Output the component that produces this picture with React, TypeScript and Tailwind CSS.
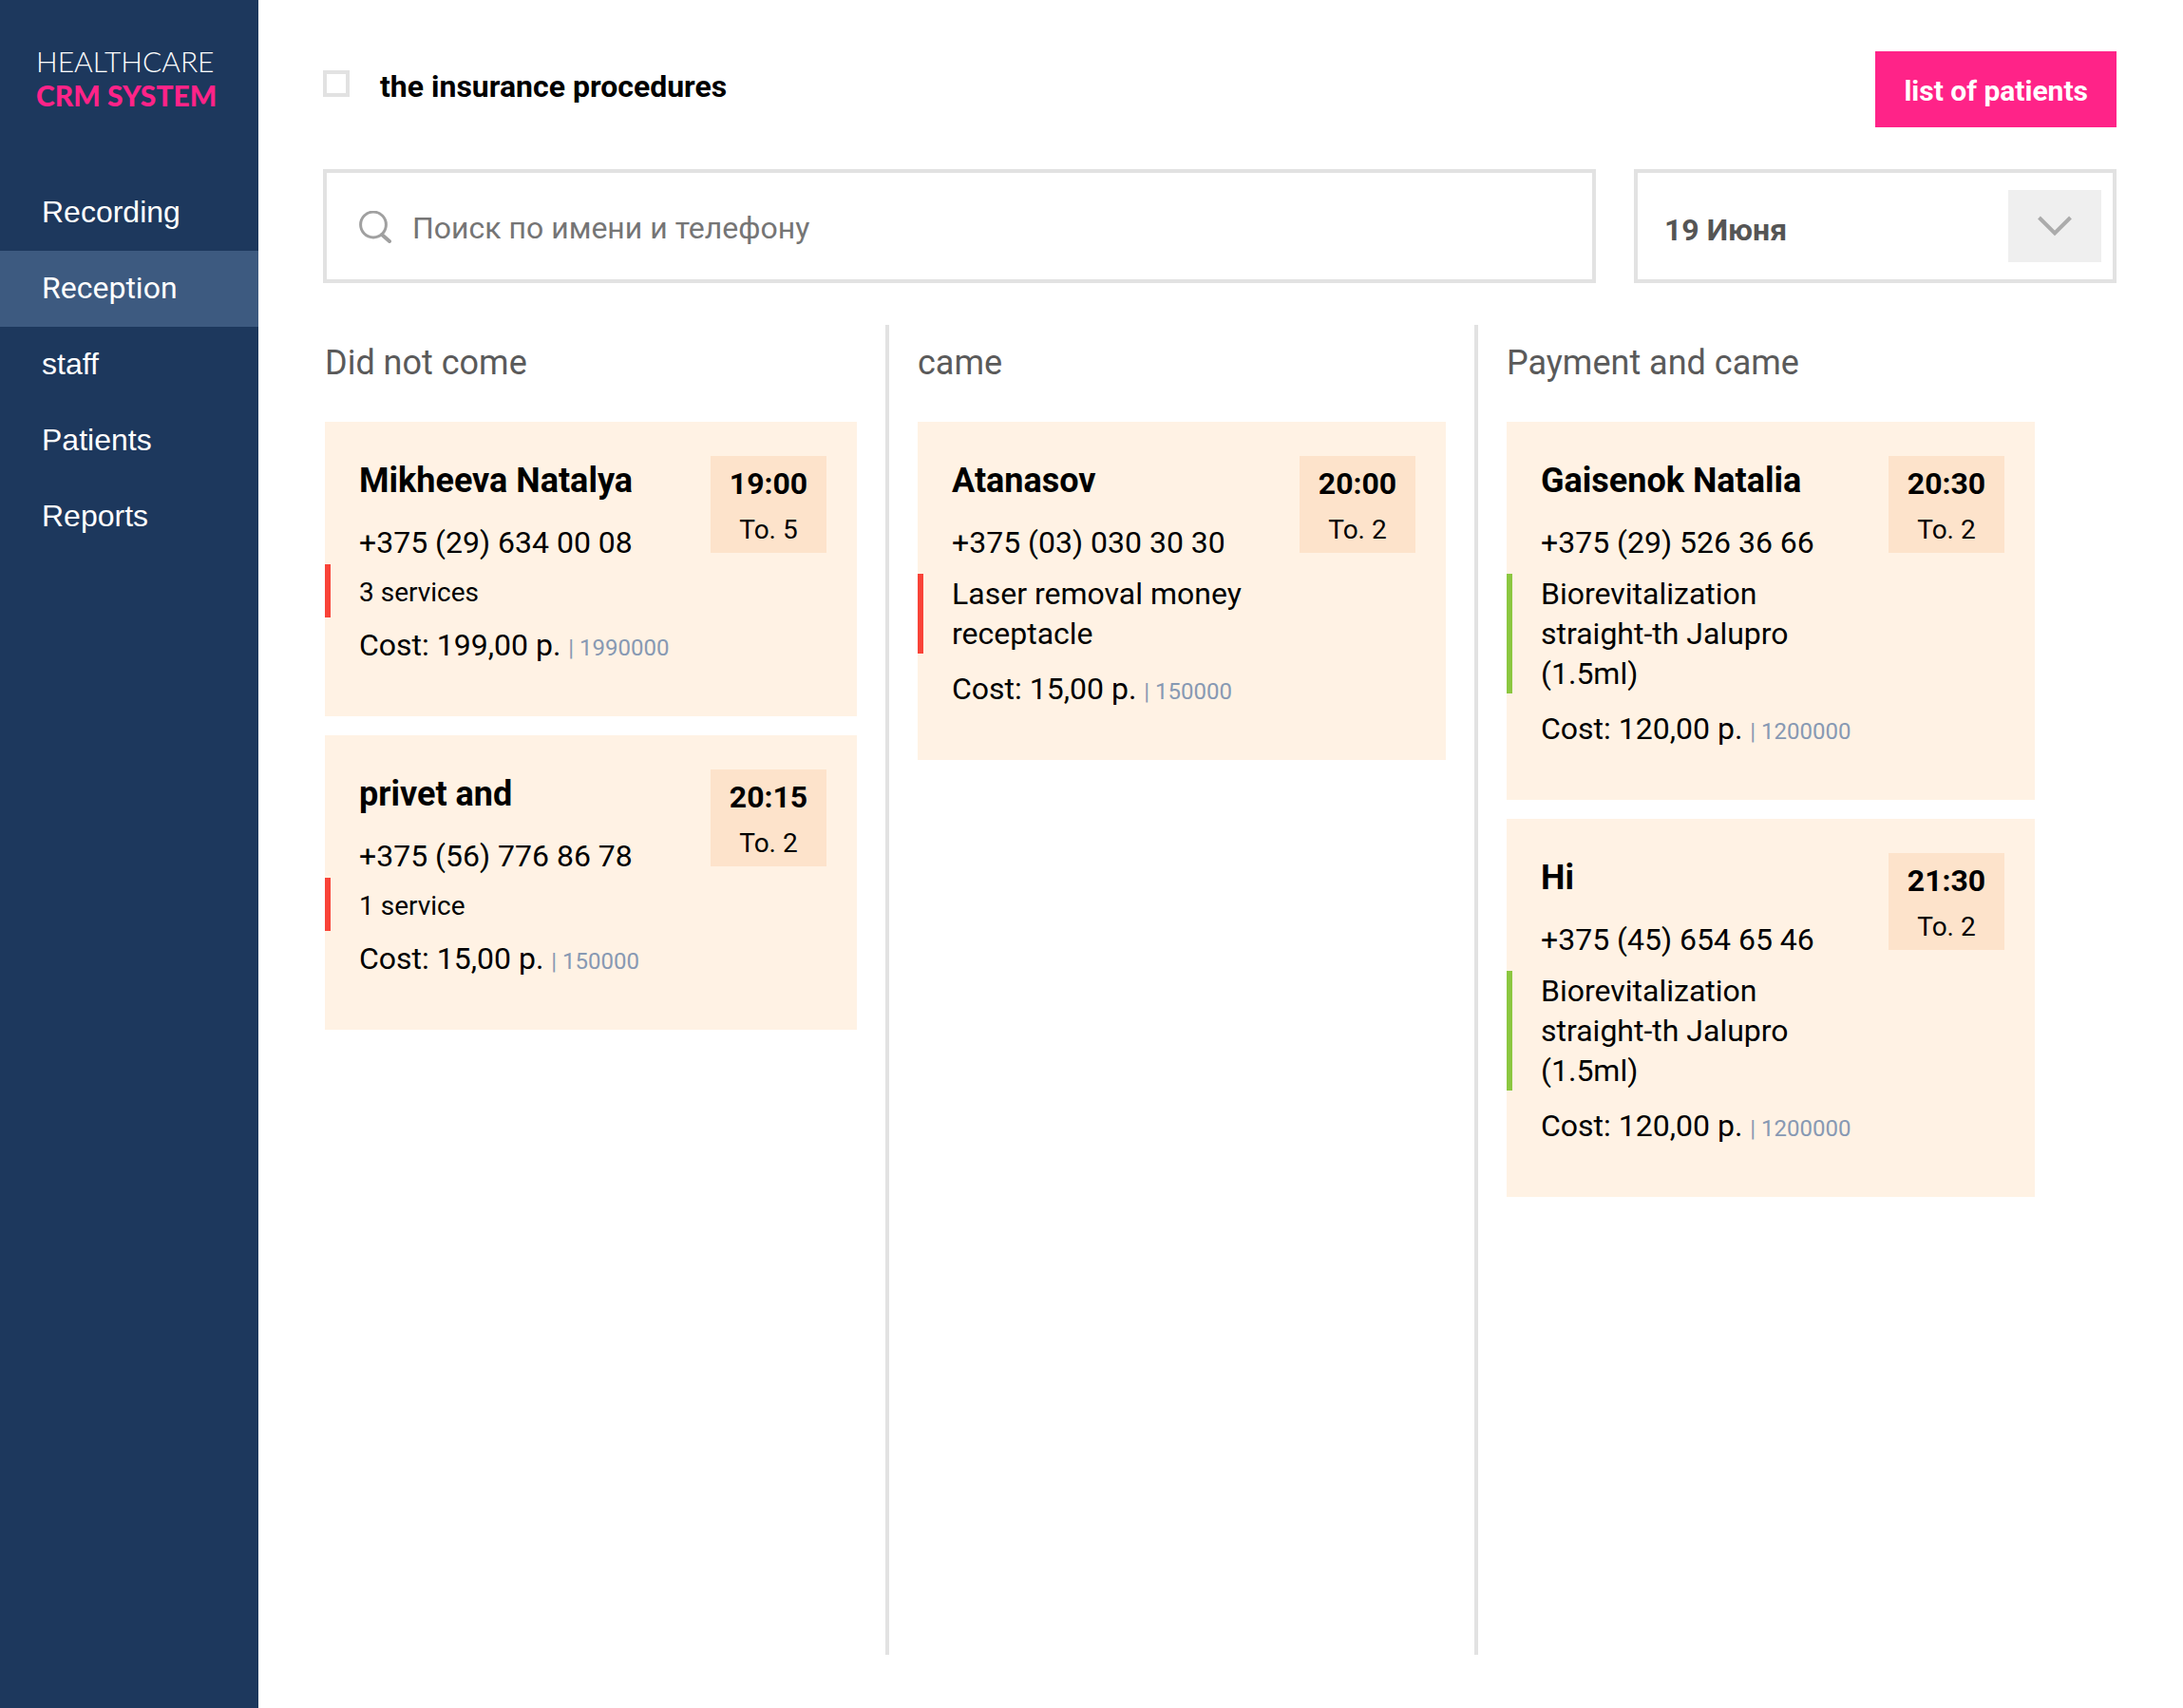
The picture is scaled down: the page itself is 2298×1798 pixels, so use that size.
import { useState } from "react";

type Visit = {
  name: string;
  phone: string;
  time: string;
  place: string;
  service: string;
  summary?: boolean;
  paid?: boolean;
  cost: string;
  oldCost: string;
};

const navItems = ["Recording", "Reception", "staff", "Patients", "Reports"];

const columns: { title: string; visits: Visit[] }[] = [
  {
    title: "Did not come",
    visits: [
      { name: "Mikheeva Natalya", phone: "+375 (29) 634 00 08", time: "19:00", place: "To. 5", service: "3 services", summary: true, cost: "199,00", oldCost: "1990000" },
      { name: "privet and", phone: "+375 (56) 776 86 78", time: "20:15", place: "To. 2", service: "1 service", summary: true, cost: "15,00", oldCost: "150000" },
    ],
  },
  {
    title: "came",
    visits: [
      { name: "Atanasov", phone: "+375 (03) 030 30 30", time: "20:00", place: "To. 2", service: "Laser removal money receptacle", cost: "15,00", oldCost: "150000" },
    ],
  },
  {
    title: "Payment and came",
    visits: [
      { name: "Gaisenok Natalia", phone: "+375 (29) 526 36 66", time: "20:30", place: "To. 2", service: "Biorevitalization straight-th Jalupro (1.5ml)", paid: true, cost: "120,00", oldCost: "1200000" },
      { name: "Hi", phone: "+375 (45) 654 65 46", time: "21:30", place: "To. 2", service: "Biorevitalization straight-th Jalupro (1.5ml)", paid: true, cost: "120,00", oldCost: "1200000" },
    ],
  },
];

function Sidebar() {
  return (
    <aside className="w-[272px] shrink-0 bg-[#1d385d] text-white">
      <a href="#" className="flex h-[184px] flex-col pt-[46px] pl-[38px] font-['Lato',sans-serif] text-3xl leading-9">
        <span className="font-light">HEALTHCARE</span>
        <span className="font-black text-[#ff2388]">CRM SYSTEM</span>
      </a>
      <nav className="flex flex-col">
        {navItems.map((item) => (
          <a
            key={item}
            href="#"
            aria-current={item === "Reception" ? "page" : undefined}
            className={
              item === "Reception"
                ? "flex h-20 items-center bg-[#3d5a80] pb-[2px] pl-11 font-['Roboto',sans-serif] text-[32px]"
                : "flex h-20 items-center pb-[2px] pl-11 font-['Liberation_Sans',sans-serif] text-[32px]"
            }
          >
            {item}
          </a>
        ))}
      </nav>
    </aside>
  );
}

function VisitCard({ visit }: { visit: Visit }) {
  const bar = visit.paid ? "border-[#8cc740]" : "border-[#f94338]";
  const size = visit.summary
    ? "mt-[2px] pt-1 text-[28px] leading-[52px]"
    : "mt-3 text-[32px] leading-[42px]";
  return (
    <article className="flex items-start bg-[#fff2e4] pt-9 pr-8 pb-[54px]">
      <div className="min-w-0 flex-1 text-[32px] leading-[42px]">
        <h3 className="pl-9 text-4xl leading-[52px] font-bold">{visit.name}</h3>
        <p className="mt-[18px] pl-9">{visit.phone}</p>
        <p className={`border-l-6 pr-8 pl-[30px] ${bar} ${size}`}>{visit.service}</p>
        <p className={visit.summary ? "mt-2 pl-9" : "mt-4 pl-9"}>
          Cost: {visit.cost} p. <span className="text-2xl leading-none text-[#8799b3]">| {visit.oldCost}</span>
        </p>
      </div>
      <div className="flex h-[102px] w-[122px] shrink-0 flex-col items-center bg-[#fde3cb] pt-2">
        <time className="text-[32px] leading-[42px] font-bold">{visit.time}</time>
        <span className="mt-[10px] text-[28px] leading-9">{visit.place}</span>
      </div>
    </article>
  );
}

export default function App() {
  const [insurance, setInsurance] = useState(false);
  return (
    <div className="flex min-h-screen bg-white font-['Roboto',sans-serif] text-black">
      <Sidebar />
      <main className="flex min-w-0 flex-1 flex-col pb-14">
        <header className="flex h-[178px] items-start justify-between pt-[54px] pr-[70px] pl-[68px]">
          <label className="flex items-center gap-8 pt-4 text-[32px] leading-[42px] font-bold">
            <input
              type="checkbox"
              checked={insurance}
              onChange={(e) => setInsurance(e.target.checked)}
              className="mb-1.5 size-7 appearance-none border-4 border-[#e2e2e2] checked:bg-[#ff2388]"
            />
            the insurance procedures
          </label>
          <button type="button" className="h-20 bg-[#ff2388] px-[30px] pt-[2px] text-[30px] font-bold text-white">
            list of patients
          </button>
        </header>

        <div className="flex h-[120px] gap-10 pr-[70px] pl-[68px]">
          <div className="flex flex-1 items-center gap-[22px] border-4 border-[#e2e2e2] px-[34px]">
            <svg viewBox="0 0 34 34" className="mt-[2px] size-[34px] shrink-0" fill="none" stroke="#a0a0a0" aria-hidden="true">
              <circle cx="15" cy="14.5" r="13.4" strokeWidth="3" />
              <path d="M24 25l8 7" strokeWidth="4" strokeLinecap="round" />
            </svg>
            <input
              type="text"
              aria-label="Поиск по имени и телефону"
              placeholder="Поиск по имени и телефону"
              className="h-full min-w-0 flex-1 pt-1 text-[32px] text-[#555] outline-none placeholder:text-[#757575]"
            />
          </div>
          <div className="relative w-[508px] border-4 border-[#e2e2e2]">
            <select
              aria-label="Дата"
              className="h-full w-full appearance-none bg-transparent pt-2 pl-7 text-[32px] font-bold text-[#555] outline-none"
            >
              <option>19 Июня</option>
            </select>
            <span className="pointer-events-none absolute top-[18px] right-3 flex h-[76px] w-[98px] items-center justify-center bg-[#efefef]">
              <svg viewBox="0 0 36 22" className="h-[22px] w-9" fill="none" stroke="#ababab" strokeWidth="4" aria-hidden="true">
                <path d="M1.500 2L18 18.500L34.500 2" />
              </svg>
            </span>
          </div>
        </div>

        <div className="mt-11 grid flex-1 grid-cols-3 pr-[126px] pl-10">
          {columns.map((column) => (
            <section
              key={column.title}
              className="flex min-w-0 flex-col border-l-4 border-[#e2e2e2] px-[30px] first:border-l-0"
            >
              <h2 className="h-[102px] pt-4 text-4xl leading-12 text-[#5a5a5a]">{column.title}</h2>
              <div className="flex flex-col gap-5">
                {column.visits.map((visit) => (
                  <VisitCard key={visit.name} visit={visit} />
                ))}
              </div>
            </section>
          ))}
        </div>
      </main>
    </div>
  );
}
